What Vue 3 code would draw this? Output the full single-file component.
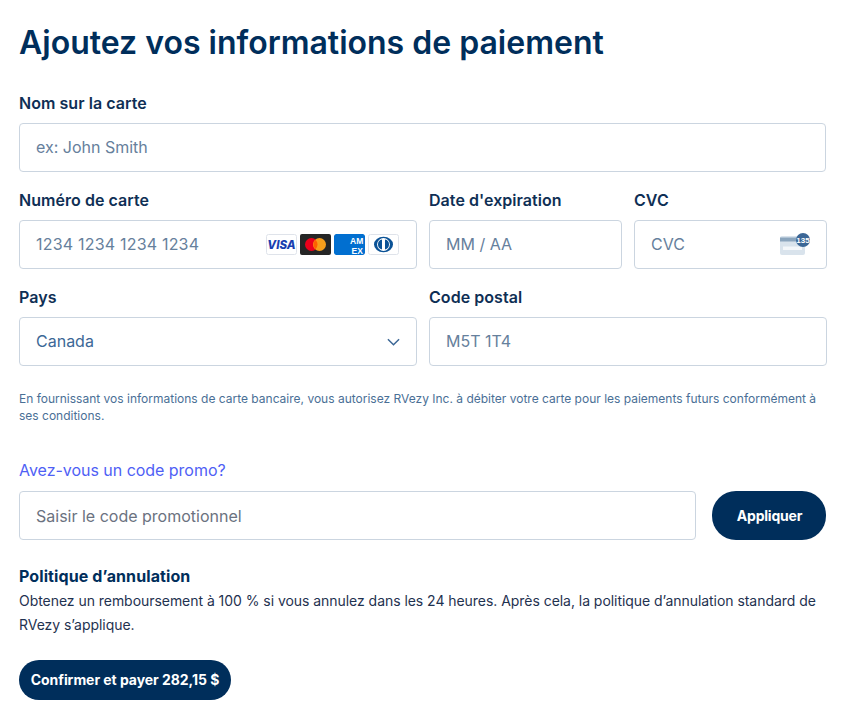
<script setup>
const title = 'Ajoutez vos informations de paiement'
</script>

<template>
  <main class="page">
    <h1 class="title">{{ title }}</h1>

    <section class="field name-field">
      <label class="label">Nom sur la carte</label>
      <div class="input"><span class="ph">ex: John Smith</span></div>
    </section>

    <section class="grid">
      <div class="field">
        <label class="label">Numéro de carte</label>
        <div class="input">
          <span class="ph digits">1234 1234 1234 1234</span>
          <div class="brands">
            <svg class="brand" viewBox="0 0 31 21">
              <rect x=".5" y=".5" width="30" height="20" rx="2" fill="#fff" stroke="#dfe3ea" />
              <text x="15.5" y="15" text-anchor="middle" class="visa">VISA</text>
            </svg>
            <svg class="brand" viewBox="0 0 31 21">
              <rect width="31" height="21" rx="2" fill="#252525" />
              <circle cx="11.5" cy="10.5" r="6.5" fill="#eb001b" />
              <circle cx="19.5" cy="10.5" r="6.5" fill="#f79e1b" />
              <path d="M15.5 5.8a6.5 6.5 0 0 1 0 9.4a6.5 6.5 0 0 1 0-9.4z" fill="#ff5f00" />
            </svg>
            <svg class="brand" viewBox="0 0 31 21">
              <defs>
                <clipPath id="amex-clip"><rect width="31" height="21" rx="2" /></clipPath>
              </defs>
              <g clip-path="url(#amex-clip)">
                <rect width="31" height="21" rx="2" fill="#016fd0" />
                <text x="16" y="10" class="amex">AM</text>
                <text x="17.5" y="19.8" class="amex">EX</text>
              </g>
            </svg>
            <svg class="brand diners" viewBox="0 0 31 21">
              <rect x=".5" y=".5" width="30" height="20" rx="2" fill="#fff" stroke="#dfe3ea" />
              <ellipse cx="15.5" cy="10.5" rx="9.5" ry="7.8" fill="#0a5296" />
              <circle cx="15.5" cy="10.5" r="6.4" fill="#fff" />
              <path d="M14 5.6a5 5 0 0 0 0 9.8zM17 5.6a5 5 0 0 1 0 9.8z" fill="#0a5296" />
            </svg>
          </div>
        </div>
      </div>
      <div class="field">
        <label class="label">Date d'expiration</label>
        <div class="input"><span class="ph">MM / AA</span></div>
      </div>
      <div class="field">
        <label class="label">CVC</label>
        <div class="input">
          <span class="ph">CVC</span>
          <svg class="cvc" viewBox="0 0 30 22">
            <rect x="0" y="3" width="25" height="19" rx="2" fill="#d9e3ec" />
            <rect x="0" y="4.5" width="25" height="4" fill="#8ba5bd" />
            <rect x="3" y="13.5" width="19" height="3.5" fill="#f4f7fa" />
            <circle cx="23" cy="7" r="7" fill="#3c6796" />
            <text x="23" y="10" text-anchor="middle" class="cvc-num">135</text>
          </svg>
        </div>
      </div>
      <div class="field">
        <label class="label">Pays</label>
        <div class="input">
          <span class="value">Canada</span>
          <svg class="chev" viewBox="0 0 14 8">
            <path d="M1 1l6 6 6-6" fill="none" stroke="#3c6796" stroke-width="1.6" />
          </svg>
        </div>
      </div>
      <div class="field span2">
        <label class="label">Code postal</label>
        <div class="input"><span class="ph">M5T 1T4</span></div>
      </div>
    </section>

    <p class="notice">En fournissant vos informations de carte bancaire, vous autorisez RVezy Inc. à débiter votre carte pour les paiements futurs conformément à ses conditions.</p>

    <a class="promo">Avez-vous un code promo?</a>
    <div class="promo-row">
      <div class="input grow"><span class="ph gray">Saisir le code promotionnel</span></div>
      <button class="btn apply">Appliquer</button>
    </div>

    <h2 class="policy-title">Politique d’annulation</h2>
    <p class="policy">Obtenez un remboursement à 100 % si vous annulez dans les 24 heures. Après cela, la politique d’annulation standard de RVezy s’applique.</p>

    <button class="btn confirm">Confirmer et payer 282,15 $</button>
  </main>
</template>

<style scoped>
.page {
  width: 860px;
  height: 716px;
  box-sizing: border-box;
  padding: 21px 33px 0 19px;
  font-family: Inter, "Liberation Sans", sans-serif;
  color: #002e5b;
  overflow: hidden;
  background: #fff;
}
.title {
  margin: 0;
  font-size: 32px;
  line-height: 44px;
  font-weight: 600;
  color: #002e5b;
}
.field {
  display: flex;
  flex-direction: column;
  min-width: 0;
}
.name-field {
  margin-top: 27px;
  margin-right: 1px;
}
.label {
  font-size: 16px;
  line-height: 22px;
  font-weight: 600;
  letter-spacing: 0.05px;
  color: #0f2f55;
  margin-bottom: 9px;
}
.input {
  height: 49px;
  box-sizing: border-box;
  border: 1px solid #cbd5e0;
  border-radius: 4px;
  padding: 0 16px;
  display: flex;
  align-items: center;
  justify-content: space-between;
  background: #fff;
}
.ph {
  font-size: 16px;
  color: #66809c;
  margin-bottom: 2px;
}
.digits {
  letter-spacing: 0.2px;
}
.gray {
  color: #6b7280;
  margin-bottom: 0;
}
.value {
  font-size: 16px;
  color: #3c6796;
  margin-bottom: 2px;
}
.grid {
  margin-top: 17px;
  display: grid;
  grid-template-columns: 398px 193px 193px;
  column-gap: 12px;
  row-gap: 17px;
}
.span2 {
  grid-column: span 2;
}
.brands {
  display: flex;
  gap: 3px;
  margin-right: -16px;
  padding-right: 17px;
}
.brand {
  width: 31px;
  height: 21px;
  display: block;
}
.diners {
  margin-left: 0;
}
.visa {
  font: italic 800 11.5px Inter, sans-serif;
  fill: #1a3fb0;
}
.amex {
  font: 700 8.5px "Liberation Sans", sans-serif;
  fill: #fff;
}
.cvc {
  width: 30px;
  height: 22px;
  margin-right: 0;
  margin-top: -2px;
}
.cvc-num {
  font: 700 8px "Liberation Sans", sans-serif;
  fill: #fff;
}
.chev {
  width: 13px;
  height: 8px;
}
.notice {
  margin: 24px 0 0;
  font-size: 12px;
  line-height: 17px;
  color: #4a6f96;
}
.promo {
  display: block;
  margin-top: 35px;
  font-size: 16px;
  line-height: 22px;
  color: #4f5ff5;
  letter-spacing: -0.03px;
}
.promo-row {
  margin-top: 10px;
  display: flex;
  gap: 16px;
  align-items: center;
}
.grow {
  flex: 1;
}
.btn {
  border: 0;
  background: #002e5b;
  color: #fff;
  font-family: inherit;
  font-weight: 700;
  font-size: 14px;
  border-radius: 24px;
}
.apply {
  width: 114px;
  height: 49px;
  margin-right: 1px;
  padding: 0 0 0 1px;
  letter-spacing: -0.2px;
}
.policy-title {
  margin: 25px 0 0;
  font-size: 16px;
  line-height: 22px;
  font-weight: 700;
  letter-spacing: 0.1px;
  color: #002e5b;
}
.policy {
  margin: 2px 0 0;
  font-size: 14px;
  line-height: 24px;
  letter-spacing: -0.045px;
  color: #1f3250;
}
.confirm {
  display: block;
  margin-top: 23px;
  width: 212px;
  height: 40px;
  padding: 0 0 2px;
  letter-spacing: -0.05px;
}
</style>
